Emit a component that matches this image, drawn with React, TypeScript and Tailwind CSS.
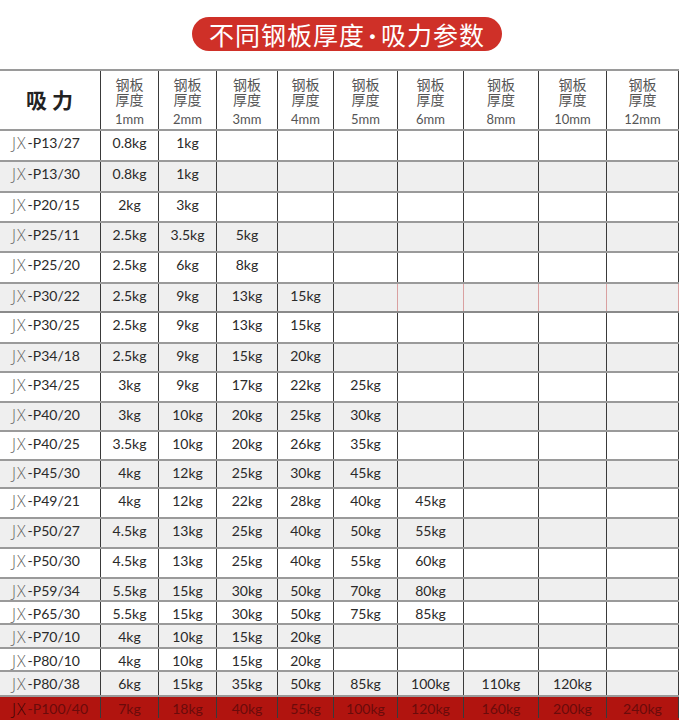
import React from "react";

const COLS = "grid-cols-[101px_58px_58px_61px_56px_64px_66px_75px_68px_72px]";
const THICK = ["1mm", "2mm", "3mm", "4mm", "5mm", "6mm", "8mm", "10mm", "12mm"];

const ROWS: string[][] = [
    ["P13/27", "0.8kg", "1kg"],
    ["P13/30", "0.8kg", "1kg"],
    ["P20/15", "2kg", "3kg"],
    ["P25/11", "2.5kg", "3.5kg", "5kg"],
    ["P25/20", "2.5kg", "6kg", "8kg"],
    ["P30/22", "2.5kg", "9kg", "13kg", "15kg"],
    ["P30/25", "2.5kg", "9kg", "13kg", "15kg"],
    ["P34/18", "2.5kg", "9kg", "15kg", "20kg"],
    ["P34/25", "3kg", "9kg", "17kg", "22kg", "25kg"],
    ["P40/20", "3kg", "10kg", "20kg", "25kg", "30kg"],
    ["P40/25", "3.5kg", "10kg", "20kg", "26kg", "35kg"],
    ["P45/30", "4kg", "12kg", "25kg", "30kg", "45kg"],
    ["P49/21", "4kg", "12kg", "22kg", "28kg", "40kg", "45kg"],
    ["P50/27", "4.5kg", "13kg", "25kg", "40kg", "50kg", "55kg"],
    ["P50/30", "4.5kg", "13kg", "25kg", "40kg", "55kg", "60kg"],
    ["P59/34", "5.5kg", "15kg", "30kg", "50kg", "70kg", "80kg"],
    ["P65/30", "5.5kg", "15kg", "30kg", "50kg", "75kg", "85kg"],
    ["P70/10", "4kg", "10kg", "15kg", "20kg"],
    ["P80/10", "4kg", "10kg", "15kg", "20kg"],
    ["P80/38", "6kg", "15kg", "35kg", "50kg", "85kg", "100kg", "110kg", "120kg"],
    ["P100/40", "7kg", "18kg", "40kg", "55kg", "100kg", "120kg", "160kg", "200kg", "240kg"],
];

// 행 높이 (테두리 포함)
const HEIGHTS = [31, 31, 30, 30, 31, 29, 31, 29, 30, 29, 29, 28, 30, 30, 30, 23, 23, 24, 23, 25, 23];

const Row: React.FC<{ cells: string[]; index: number }> = ({ cells, index }) => {
    const isLast = index === ROWS.length - 1;
    const isPink = index === 5;
    const bg = isLast ? "bg-[#b1140f]" : index % 2 === 1 ? "bg-[#efefef]" : "bg-white";
    const text = isLast ? "text-[#6a0b0b]" : "text-[#2a2a2a]";

    return (
        <div
            className={`grid ${COLS} ${bg} border-b-2 ${
                isLast ? "border-[#b1140f]" : isPink ? "border-[#8a8a8a]" : "border-[#9a9a9a]"
            }`}
            style={{ height: HEIGHTS[index] }}
        >
            <div className={`flex items-start pt-[3px] pl-[12px] border-r border-[#3a3a3a] ${text}`}>
                <span
                    className={`text-[16px] leading-[18px] font-light tracking-[1px] font-['Open_Sans',sans-serif] ${
                        isLast ? "text-[#3d0606]" : "text-[#666]"
                    }`}
                >
                    JX
                </span>
                <span className="text-[14px] leading-[18px] ml-[1px] font-['Lato',sans-serif]">
                    -{cells[0]}
                </span>
            </div>
            {THICK.map((_, c) => (
                <div
                    key={c}
                    className={`flex justify-center items-start pt-[3px] border-r ${
                        isPink && c >= 4 ? "border-[#d9a0a0]" : "border-[#3a3a3a]"
                    } ${text}`}
                >
                    <span className="text-[14px] leading-[18px] font-['Lato',sans-serif]">
                        {cells[c + 1] ?? ""}
                    </span>
                </div>
            ))}
        </div>
    );
};

export default function App() {
    return (
        <div className="w-[680px] h-[721px] bg-white overflow-hidden">
            {/* 제목 */}
            <div className="flex pt-[17px] pl-[192px]">
                <div className="w-[310px] h-[34px] rounded-full bg-[#cf3028] flex items-center justify-center text-white text-[25px] tracking-[1px] leading-none font-['Noto_Sans_CJK_SC',sans-serif]">
                    不同钢板厚度<span className="font-['Lato',sans-serif] font-bold px-[4px]">·</span>吸力参数
                </div>
            </div>

            {/* 표 */}
            <div className="mt-[18px] w-[679px] border-t-2 border-[#9a9a9a]">
                <div className={`grid ${COLS} h-[60px] border-b-2 border-[#9a9a9a] bg-white`}>
                    <div className="flex items-center justify-center border-r border-[#3a3a3a]">
                        <span className="text-[21px] font-bold tracking-[5px] text-[#222] pl-[4px] font-['Noto_Sans_CJK_SC',sans-serif]">
                            吸力
                        </span>
                    </div>
                    {THICK.map((t) => (
                        <div
                            key={t}
                            className="flex flex-col items-center pt-[6px] border-r border-[#3a3a3a] text-[#555]"
                        >
                            <span className="w-[30px] text-center text-[14px] leading-[15px] break-all font-['Noto_Sans_CJK_SC',sans-serif]">
                                钢板厚度
                            </span>
                            <span className="text-[13px] leading-[15px] mt-[5px] font-['Lato',sans-serif]">
                                {t}
                            </span>
                        </div>
                    ))}
                </div>
                {ROWS.map((r, i) => (
                    <Row key={r[0]} cells={r} index={i} />
                ))}
            </div>
        </div>
    );
}
